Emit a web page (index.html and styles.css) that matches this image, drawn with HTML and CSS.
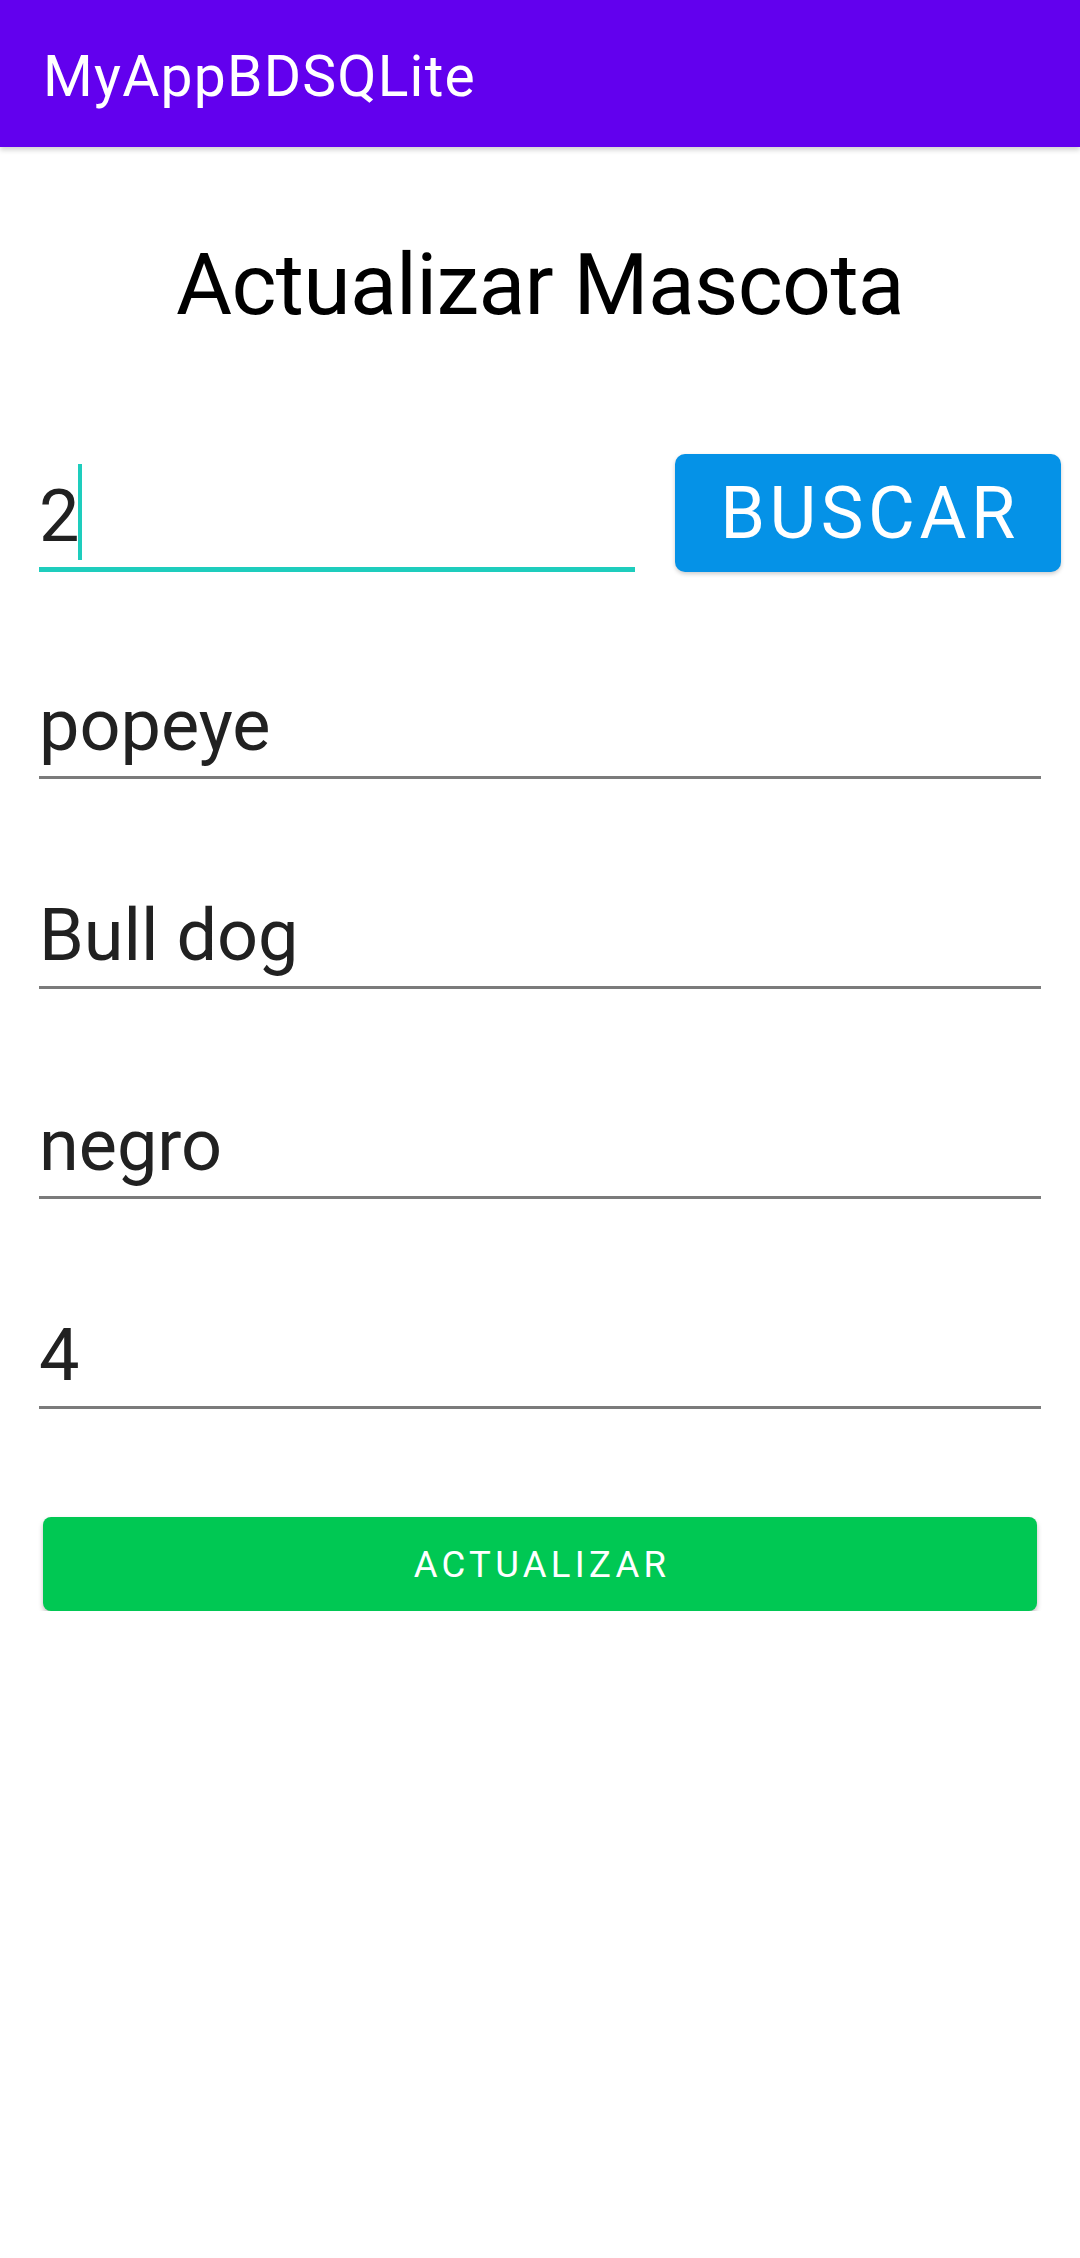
FILE: index.html
```html
<!DOCTYPE html>
<html lang="es">
<head>
<meta charset="utf-8">
<title>MyAppBDSQLite</title>
<link rel="stylesheet" href="styles.css">
</head>
<body>
<header class="appbar">
  <span class="appbar-title">MyAppBDSQLite</span>
</header>
<main class="content">
  <h1 class="title">Actualizar Mascota</h1>
  <div class="search-row">
    <div class="field field-focused">
      <span class="field-text">2</span><span class="caret"></span>
    </div>
    <button class="btn btn-search">BUSCAR</button>
  </div>
  <div class="field field-plain"><span class="field-text">popeye</span></div>
  <div class="field field-plain"><span class="field-text">Bull dog</span></div>
  <div class="field field-plain"><span class="field-text">negro</span></div>
  <div class="field field-plain"><span class="field-text">4</span></div>
  <button class="btn btn-update">ACTUALIZAR</button>
</main>
</body>
</html>
```
FILE: styles.css
```css
* { box-sizing: border-box; }
html, body {
  margin: 0;
  padding: 0;
  background: #ffffff;
  font-family: Roboto, "Noto Sans", sans-serif;
}
.appbar {
  height: 147px;
  background: #6200ee;
  display: flex;
  align-items: center;
  padding: 8px 0 0 43px;
  box-shadow: 0 3px 5px rgba(0, 0, 0, 0.18);
  position: relative;
}
.appbar-title {
  color: #ffffff;
  font-size: 57px;
  letter-spacing: 1.2px;
  line-height: 1.2;
}
.content {
  padding: 0 39px;
}
.title {
  margin: 88px 0 0 0;
  font-weight: 400;
  font-size: 86px;
  letter-spacing: -0.7px;
  line-height: 100px;
  text-align: center;
  color: #000000;
}
.search-row {
  margin: 119px -20px 0 0;
  display: flex;
  align-items: flex-end;
  gap: 40px;
}
.field {
  display: flex;
  align-items: flex-start;
  height: 103px;
  border-bottom: 3px solid #7b7b7b;
}
.field-focused {
  width: 596px;
  flex: none;
  height: 105px;
  border-bottom: 5px solid #1ecdbd;
}
.field-plain {
  margin-top: 107px;
}
.search-row + .field-plain {
  margin-top: 104px;
}
.field-text {
  font-size: 72px;
  line-height: 100px;
  color: #212121;
  white-space: pre;
}
.caret {
  display: block;
  width: 4px;
  height: 96px;
  margin: -3px 0 0 -1px;
  background: #1ecdbd;
}
.btn {
  border: none;
  color: #ffffff;
  font-family: Roboto, "Noto Sans", sans-serif;
  font-weight: 400;
  display: flex;
  align-items: center;
  justify-content: center;
  padding: 0;
}
.btn-search {
  flex: 1;
  height: 118px;
  background: #0592e7;
  border-radius: 10px;
  font-size: 72px;
  letter-spacing: 4.5px;
  padding-left: 4px;
  box-shadow: 0 2px 4px rgba(0, 0, 0, 0.2);
}
.btn-update {
  width: 994px;
  height: 94px;
  margin: 108px 0 0 4px;
  background: #00c853;
  border-radius: 8px;
  font-size: 36.5px;
  letter-spacing: 4.3px;
  padding-left: 4px;
  box-shadow: 0 3px 5px rgba(0, 0, 0, 0.25);
}
```
